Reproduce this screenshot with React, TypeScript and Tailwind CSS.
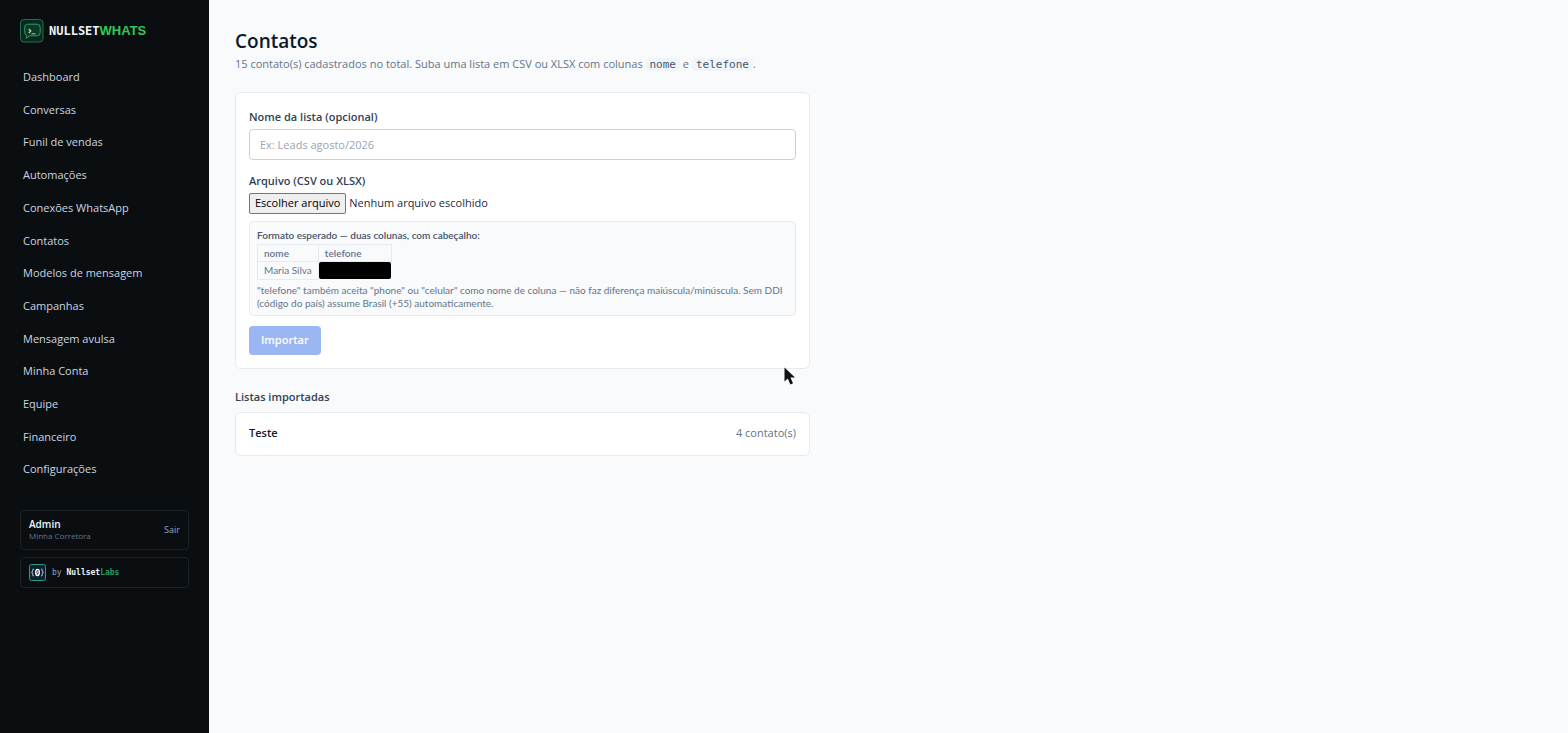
import React from "react";

const NAV_ITEMS = [
  "Dashboard",
  "Conversas",
  "Funil de vendas",
  "Automações",
  "Conexões WhatsApp",
  "Contatos",
  "Modelos de mensagem",
  "Campanhas",
  "Mensagem avulsa",
  "Minha Conta",
  "Equipe",
  "Financeiro",
  "Configurações",
];

function BrandMark() {
  return (
    <svg viewBox="0 0 24 24" className="size-6 shrink-0" aria-hidden="true">
      <rect x="0.5" y="0.5" width="22.5" height="22.5" rx="3.5" fill="#08291f" stroke="#2c6a4c" />
      <path
        d="M7.4 5.2h9.8a3 3 0 0 1 3 3v5.6a3 3 0 0 1-3 3H9.6l-3.4 2.5.5-3a3 3 0 0 1-2-2.800V8.200a3 3 0 0 1 2.700-3z"
        fill="#0b3a29"
        stroke="#3d9468"
        strokeWidth="1"
      />
      <path d="M8.800 10l2 2-2 2" fill="none" stroke="#b9e3a4" strokeWidth="1.200" />
      <path d="M11.500 14.800h4" stroke="#8fd3a0" strokeWidth="1" />
    </svg>
  );
}

function LabsMark() {
  return (
    <svg viewBox="0 0 17 17" className="size-[17px] shrink-0" aria-hidden="true">
      <rect x="0.500" y="0.500" width="16" height="16" rx="2" fill="#0b2230" stroke="#2f9c7e" />
      <path
        d="M5 5c-1.400 0-1.200.8-1.200 1.800 0 1.200-.5 1.600-1.500 1.700 1 .1 1.500.5 1.500 1.700 0 1-.2 1.800 1.200 1.800M12 5c1.400 0 1.200.8 1.200 1.800 0 1.200.5 1.600 1.500 1.700-1 .1-1.500.5-1.500 1.700 0 1 .2 1.800-1.200 1.800"
        fill="none"
        stroke="#9db4c8"
        strokeWidth="1.100"
      />
      <ellipse cx="8.500" cy="8.500" rx="1.800" ry="2.900" fill="none" stroke="#f3f4f6" strokeWidth="1.500" />
      <path d="M7 11.200l3-5.400" stroke="#f0c4c4" strokeWidth="1" />
    </svg>
  );
}

function Sidebar() {
  return (
    <aside className="flex w-[209px] shrink-0 flex-col bg-[#0a0e11] px-5 pt-[19px] text-[#cbd5e1]">
      <a href="#inicio" className="flex items-center gap-[5px]">
        <BrandMark />
        <span className="flex items-baseline leading-6 font-bold">
          <span className="font-['DejaVu_Sans_Mono',monospace] text-xs text-[#f4f4f5]">NULLSET</span>
          <span className="font-['Liberation_Sans',sans-serif] text-[13px] text-[#34c759]">WHATS</span>
        </span>
      </a>
      <nav className="mt-[18px] grid h-[425px] auto-rows-fr text-[11px]">
        {NAV_ITEMS.map((item) => (
          <a key={item} href="#" className="flex items-center px-[3px]">
            {item}
          </a>
        ))}
      </nav>
      <div className="mt-6 flex h-10 items-center justify-between rounded border border-[#1b2126] px-2">
        <div>
          <p className="text-[10px] leading-3 font-semibold text-[#f1f5f9]">Admin</p>
          <p className="text-[8px] leading-3 text-[#64748b]">Minha Corretora</p>
        </div>
        <button type="button" className="text-[9px] text-[#94a3b8]">
          Sair
        </button>
      </div>
      <div className="mt-[7px] flex h-[31px] items-center gap-[6px] rounded border border-[#1b2126] px-2">
        <LabsMark />
        <p className="font-['DejaVu_Sans_Mono',monospace] text-[8px] text-[#94a3b8]">
          by <span className="font-bold text-[#f4f4f5]">Nullset</span>
          <span className="font-bold text-[#1f9d63]">Labs</span>
        </p>
      </div>
    </aside>
  );
}

function Code({ children }: { children: React.ReactNode }) {
  return (
    <code className="rounded-sm bg-[#f1f5f9] px-1 font-['DejaVu_Sans_Mono',monospace] text-[11px] text-[#475569]">
      {children}
    </code>
  );
}

function ImportForm() {
  return (
    <form className="mt-[18px] rounded-md border border-[#e7ebf0] bg-white px-[13px] pt-4 pb-[13px]">
      <label htmlFor="lista" className="block text-[11px] leading-4 font-semibold text-[#334155]">
        Nome da lista (opcional)
      </label>
      <input
        id="lista"
        type="text"
        placeholder="Ex: Leads agosto/2026"
        className="mt-1 block h-[31px] w-full rounded border border-[#cbd0d8] bg-white px-[10px] text-[11px] placeholder:text-[#9ca3af]"
      />
      <p className="mt-[13px] text-[11px] leading-4 font-semibold text-[#334155]">Arquivo (CSV ou XLSX)</p>
      <div className="mt-1 flex items-center gap-[3px] text-[11px] text-[#1f2937]">
        <label
          htmlFor="arquivo"
          className="flex h-[21px] items-center rounded-xs border border-[#767676] bg-[#efefef] px-[5px] text-black"
        >
          Escolher arquivo
        </label>
        <input id="arquivo" type="file" accept=".csv,.xlsx" className="sr-only" />
        <span>Nenhum arquivo escolhido</span>
      </div>
      <div className="mt-[7px] rounded border border-[#e7ebf0] bg-[#f8fafc] px-[7px] pt-[5px] pb-[5px] font-['Lato','Open_Sans',sans-serif] text-[10px] leading-[13px] text-[#64748b]">
        <p className="leading-[17px] font-semibold text-[#475569]">Formato esperado — duas colunas, com cabeçalho:</p>
        <table className="border-collapse text-left">
          <thead>
            <tr>
              <th className="h-[17px] border border-[#e7ebf0] px-[6px] font-semibold">nome</th>
              <th className="h-[17px] w-[73px] border border-[#e7ebf0] px-[6px] font-semibold">telefone</th>
            </tr>
          </thead>
          <tbody>
            <tr>
              <td className="h-[17px] border border-[#e7ebf0] px-[6px]">Maria Silva</td>
              <td className="h-[17px] p-0">
                <div className="h-[17px] rounded-xs bg-black" />
              </td>
            </tr>
          </tbody>
        </table>
        <p className="mt-1">
          "telefone" também aceita "phone" ou "celular" como nome de coluna — não faz diferença maiúscula/minúscula.
          Sem DDI (código do país) assume Brasil (+55) automaticamente.
        </p>
      </div>
      <button
        type="submit"
        disabled
        className="mt-[10px] h-[29px] rounded bg-[#9ab7f4] px-3 text-[11px] font-semibold text-white"
      >
        Importar
      </button>
    </form>
  );
}

export default function App() {
  return (
    <div className="flex min-h-screen bg-[#f8fafc] font-['Open_Sans',sans-serif]">
      <Sidebar />
      <main className="relative min-w-0 flex-1 px-[26px] pt-[27px]">
        <div className="max-w-[575px]">
          <h1 className="text-[19px] leading-7 font-semibold text-[#0f172a]">Contatos</h1>
          <p className="text-[11px] leading-[18px] text-[#64748b]">
            15 contato(s) cadastrados no total. Suba uma lista em CSV ou XLSX com colunas <Code>nome</Code> e{" "}
            <Code>telefone</Code>.
          </p>
          <ImportForm />
          <h2 className="mt-5 text-[11px] leading-4 font-semibold text-[#334155]">Listas importadas</h2>
          <ul className="mt-[7px] rounded-md border border-[#e7ebf0] bg-white">
            <li className="flex h-[42px] items-center justify-between px-[13px] text-[11px]">
              <span className="font-semibold text-[#0f172a]">Teste</span>
              <span className="text-[#64748b]">4 contato(s)</span>
            </li>
          </ul>
        </div>
        <svg viewBox="0 0 12 18" className="absolute top-[367px] left-[575px] h-[18px] w-3" aria-hidden="true">
          <path d="M0.500 0.500v14l3.300-3.100 2.600 6 2.600-1.100-2.600-5.800h4.600z" fill="#111" />
        </svg>
      </main>
    </div>
  );
}
